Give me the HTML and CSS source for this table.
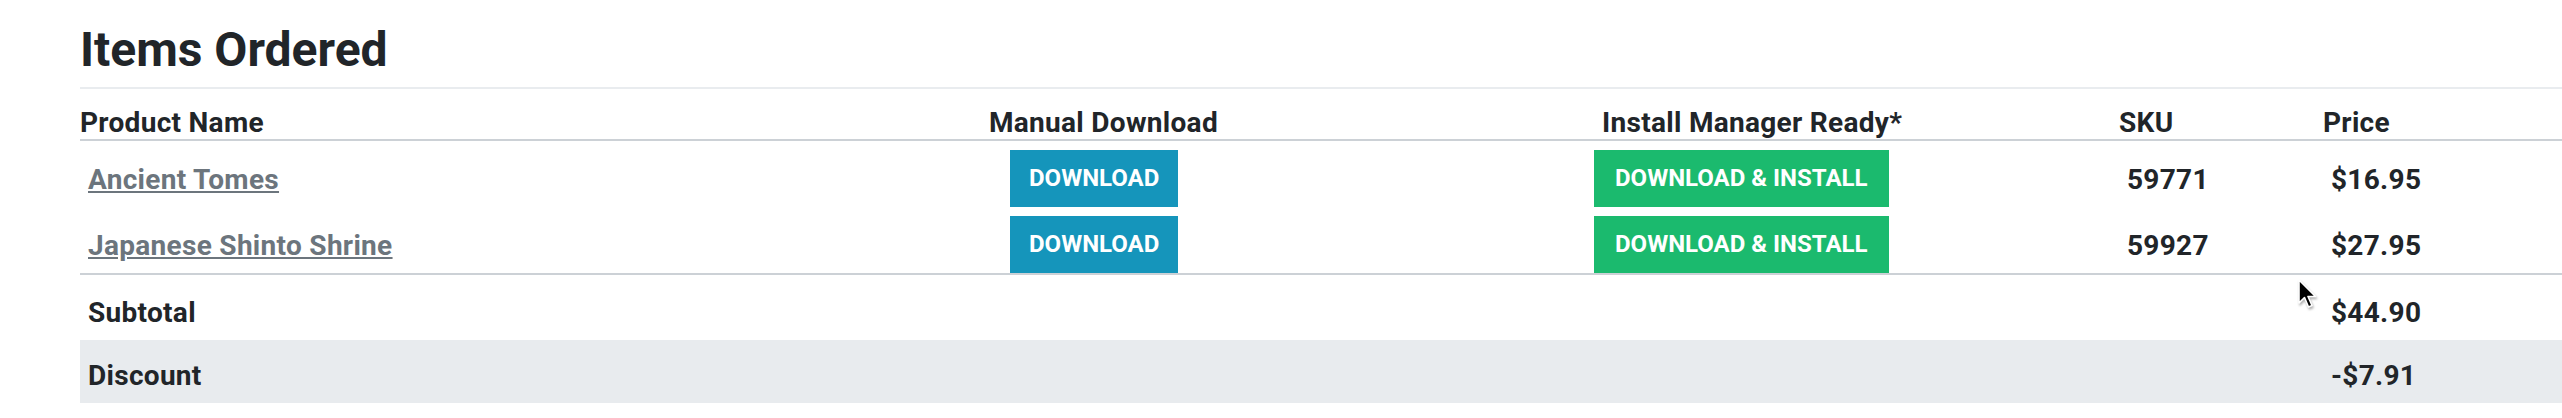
FILE: index.html
```html
<!DOCTYPE html>
<html lang="en">
<head>
  <meta charset="UTF-8" />
  <meta name="viewport" content="width=device-width, initial-scale=1.0" />
  <title>Items Ordered</title>
  <link rel="stylesheet" href="styles.css">
</head>
<body>

  <div class="order-box">
    <h1 class="order-title">Items Ordered</h1>

    <!-- Column headings -->
    <div class="order-row head-row">
      <div class="cell">Product Name</div>
      <div class="cell">Manual Download</div>
      <div class="cell install-head">Install Manager Ready*</div>
      <div class="cell">SKU</div>
      <div class="cell">Price</div>
    </div>

    <!-- Products -->
    <div class="order-row item-row">
      <div class="cell text-cell"><a href="#" class="product-link">Ancient Tomes</a></div>
      <div class="cell"><a href="#" class="btn btn-download">Download</a></div>
      <div class="cell"><a href="#" class="btn btn-install">Download &amp; Install</a></div>
      <div class="cell text-cell">59771</div>
      <div class="cell text-cell">$16.95</div>
    </div>
    <div class="order-row item-row last-item">
      <div class="cell text-cell"><a href="#" class="product-link">Japanese Shinto Shrine</a></div>
      <div class="cell"><a href="#" class="btn btn-download">Download</a></div>
      <div class="cell"><a href="#" class="btn btn-install">Download &amp; Install</a></div>
      <div class="cell text-cell">59927</div>
      <div class="cell text-cell">$27.95</div>
    </div>

    <!-- Totals -->
    <div class="total-row subtotal">
      <div class="total-label">Subtotal</div>
      <div class="total-value">$44.90</div>
    </div>
    <div class="total-row discount">
      <div class="total-label">Discount</div>
      <div class="total-value">-$7.91</div>
    </div>

    <svg class="cursor" width="22" height="32" viewBox="0 0 22 32">
      <path d="M2 2 L2 25 L7.5 19.5 L11.5 29 L15 27.5 L11 18.5 L18.5 18.5 Z" fill="#000" stroke="#fff" stroke-width="1.6" stroke-linejoin="round"/>
    </svg>
  </div>

</body>
</html>
```

FILE: styles.css
```css
body {
  font-family: Roboto, "Liberation Sans", Arial, sans-serif;
  background: #ffffff;
  color: #212529;
  margin: 0;
  overflow: hidden;
}

.order-box {
  position: relative;
  margin-left: 80px;
}

.order-title {
  font-size: 48px;
  font-weight: 700;
  line-height: 1.2;
  margin: 0;
  padding-top: 21px;
  padding-bottom: 8px;
  border-bottom: 2px solid #e9ecef;
}

.order-row {
  display: grid;
  grid-template-columns: 909px 605px 525px 204px 1fr;
  font-size: 28px;
  font-weight: 700;
  letter-spacing: 0.3px;
  line-height: 1.2;
}

.head-row {
  padding-top: 17px;
  border-bottom: 2px solid #ccd1d6;
}

.install-head {
  padding-left: 8px;
}

.item-row {
  height: 66px;
}

.last-item {
  border-bottom: 2px solid #ccd1d6;
}

.text-cell {
  padding-top: 22px;
  padding-left: 8px;
}

.product-link {
  color: #6c757d;
  text-decoration: underline;
}

.btn {
  display: inline-flex;
  align-items: center;
  height: 57px;
  margin-top: 9px;
  padding: 0 19px;
  font-size: 24px;
  font-weight: 700;
  letter-spacing: 0;
  text-transform: uppercase;
  color: #ffffff;
  text-decoration: none;
}

.btn-download {
  background-color: #1595bb;
  margin-left: 21px;
}

.btn-install {
  background-color: #1bba6e;
  padding: 0 21px;
}

.total-row {
  display: flex;
  font-size: 28px;
  font-weight: 700;
  letter-spacing: 0.3px;
  line-height: 1.2;
  box-sizing: border-box;
}

.total-label {
  width: 2243px;
  padding-left: 8px;
}

.subtotal {
  height: 65px;
  padding-top: 21px;
}

.discount {
  height: 63px;
  padding-top: 19px;
  background: #e8ebee;
}

.cursor {
  position: absolute;
  left: 2217px;
  top: 278px;
  filter: drop-shadow(1px 2px 1px rgba(0,0,0,0.3));
}
```
